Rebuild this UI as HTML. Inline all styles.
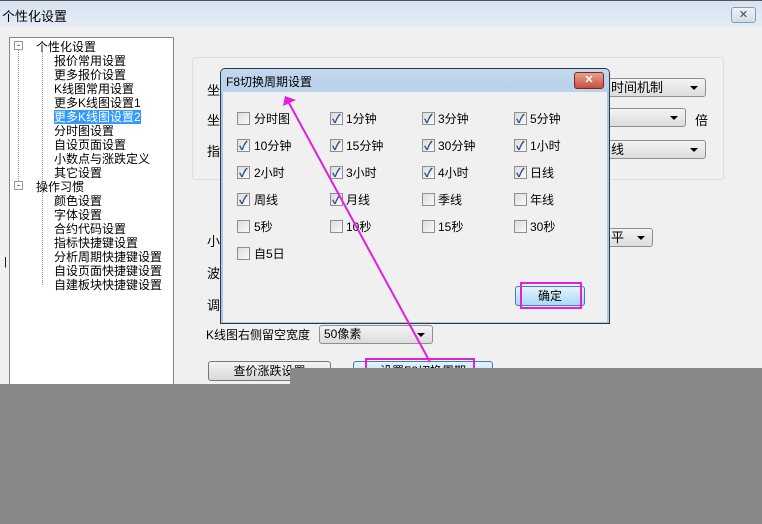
<!DOCTYPE html><html><head><meta charset="utf-8"><style>
*{margin:0;padding:0;box-sizing:border-box}
body{width:762px;height:524px;position:relative;overflow:hidden;background:#f0f0f0;font-family:"Liberation Sans","Noto Sans CJK SC",sans-serif;font-size:12px;color:#000}
.a{position:absolute;white-space:nowrap}
.sel{position:absolute;border:1px solid #8e8f8f;border-radius:3px;background:linear-gradient(#f4f4f4,#dcdcdc);height:19px;padding-left:4px;line-height:17px}
.sel:after{content:"";position:absolute;right:7px;top:7px;border:4px solid transparent;border-top:4px solid #000;border-bottom:0}
.cb{position:absolute;width:13px;height:13px;border:1px solid #8f8f8f;background:linear-gradient(135deg,#dcdcdc,#fafafa)}
.cb.c:after{content:"✓";position:absolute;left:1px;top:-3px;font-size:12px;color:#2a4a8a;font-weight:bold}
.lb{position:absolute;font-size:12px;line-height:14px}
.tree div{height:14px;line-height:14px}
</style></head><body>
<div class="a" style="left:0;top:0;width:762px;height:27px;background:linear-gradient(#d7e3f1,#e4ecf6);border-top:1px solid #555"></div>
<div class="a" style="left:2px;top:6px;font-size:13px">个性化设置</div>
<div class="a" style="left:731px;top:7px;width:25px;height:16px;border:1px solid #8a9bb0;border-radius:3px;background:linear-gradient(#eef2f8,#d3dde9);text-align:center;font-size:11px;line-height:14px;color:#445">✕</div>
<div class="a" style="left:4px;top:256px;font-size:11px">|</div>
<div class="a tree" style="left:9px;top:37px;width:165px;height:350px;background:#fff;border:1px solid #828790;padding:2px 0 0 26px;font-size:12px">
<div>个性化设置</div>
<div style="padding-left:18px">报价常用设置</div>
<div style="padding-left:18px">更多报价设置</div>
<div style="padding-left:18px">K线图常用设置</div>
<div style="padding-left:18px">更多K线图设置1</div>
<div style="padding-left:18px"><span style="background:#3399ff;color:#fff">更多K线图设置2</span></div>
<div style="padding-left:18px">分时图设置</div>
<div style="padding-left:18px">自设页面设置</div>
<div style="padding-left:18px">小数点与涨跌定义</div>
<div style="padding-left:18px">其它设置</div>
<div>操作习惯</div>
<div style="padding-left:18px">颜色设置</div>
<div style="padding-left:18px">字体设置</div>
<div style="padding-left:18px">合约代码设置</div>
<div style="padding-left:18px">指标快捷键设置</div>
<div style="padding-left:18px">分析周期快捷键设置</div>
<div style="padding-left:18px">自设页面快捷键设置</div>
<div style="padding-left:18px">自建板块快捷键设置</div>
</div>
<div class="a" style="left:14px;top:41px;width:9px;height:9px;border:1px solid #999;background:#fff;font-size:9px;line-height:7px;text-align:center">-</div>
<div class="a" style="left:14px;top:181px;width:9px;height:9px;border:1px solid #999;background:#fff;font-size:9px;line-height:7px;text-align:center">-</div>
<div class="a" style="left:18px;top:50px;height:131px;border-left:1px dotted #999"></div>
<div class="a" style="left:42px;top:52px;height:233px;border-left:1px dotted #999"></div>
<div class="a" style="left:192px;top:57px;width:532px;height:123px;border:1px solid #d5dfe5;border-radius:3px"></div>
<div class="a" style="left:207px;top:80px;font-size:13px">坐</div>
<div class="a" style="left:207px;top:110px;font-size:13px">坐</div>
<div class="a" style="left:207px;top:141px;font-size:13px">指</div>
<div class="a" style="left:207px;top:231px;font-size:13px">小</div>
<div class="a" style="left:207px;top:263px;font-size:13px">波</div>
<div class="a" style="left:207px;top:295px;font-size:13px">调</div>
<div class="sel" style="left:600px;top:78px;width:106px;font-size:13px;padding-left:10px">时间机制</div>
<div class="sel" style="left:600px;top:108px;width:86px"></div>
<div class="a" style="left:695px;top:110px;font-size:13px">倍</div>
<div class="sel" style="left:600px;top:140px;width:106px;font-size:13px;padding-left:10px">线</div>
<div class="sel" style="left:600px;top:228px;width:53px;font-size:13px;padding-left:10px">平</div>
<div class="a" style="left:206px;top:326px;font-size:12px">K线图右侧留空宽度</div>
<div class="sel" style="left:319px;top:325px;width:114px;font-size:12px">50像素</div>
<div class="a" style="left:208px;top:361px;width:123px;height:20px;border:1px solid #777;border-radius:3px;background:linear-gradient(#f4f4f4,#d8d8d8);text-align:center;line-height:18px">查价涨跌设置</div>
<div class="a" style="left:353px;top:361px;width:140px;height:20px;border:1px solid #3c7fb1;border-radius:3px;background:linear-gradient(#e5f4fc,#a9d9f5);text-align:center;line-height:18px">设置F8切换周期</div>
<div class="a" style="left:365px;top:358px;width:110px;height:12px;border:2px solid #e020e0;border-bottom:0"></div>
<div class="a" style="left:220px;top:68px;width:390px;height:256px;background:#f0f0f0;border:1px solid #2a3a4a;border-radius:5px 5px 0 0;box-shadow:0 0 0 1px #a9c8e0 inset"></div>
<div class="a" style="left:221px;top:69px;width:388px;height:23px;background:linear-gradient(#c3d7ec,#b9d1ea);border-radius:4px 4px 0 0"></div>
<div class="a" style="left:226px;top:73px;font-size:12px">F8切换周期设置</div>
<div class="a" style="left:574px;top:72px;width:30px;height:17px;border:1px solid #7a2a20;border-radius:3px;background:linear-gradient(#e8a090,#c8503a);color:#fff;text-align:center;font-size:11px;font-weight:bold;line-height:15px">✕</div>
<div class="a" style="left:222px;top:92px;width:386px;height:230px;border-left:1px solid #a9c8e0;border-right:1px solid #a9c8e0"></div>

<div class="cb" style="left:237px;top:112px"></div><div class="lb" style="left:254px;top:112px">分时图</div>
<div class="cb c" style="left:330px;top:112px"></div><div class="lb" style="left:346px;top:112px">1分钟</div>
<div class="cb c" style="left:422px;top:112px"></div><div class="lb" style="left:438px;top:112px">3分钟</div>
<div class="cb c" style="left:514px;top:112px"></div><div class="lb" style="left:530px;top:112px">5分钟</div>
<div class="cb c" style="left:237px;top:139px"></div><div class="lb" style="left:254px;top:139px">10分钟</div>
<div class="cb c" style="left:330px;top:139px"></div><div class="lb" style="left:346px;top:139px">15分钟</div>
<div class="cb c" style="left:422px;top:139px"></div><div class="lb" style="left:438px;top:139px">30分钟</div>
<div class="cb c" style="left:514px;top:139px"></div><div class="lb" style="left:530px;top:139px">1小时</div>
<div class="cb c" style="left:237px;top:166px"></div><div class="lb" style="left:254px;top:166px">2小时</div>
<div class="cb c" style="left:330px;top:166px"></div><div class="lb" style="left:346px;top:166px">3小时</div>
<div class="cb c" style="left:422px;top:166px"></div><div class="lb" style="left:438px;top:166px">4小时</div>
<div class="cb c" style="left:514px;top:166px"></div><div class="lb" style="left:530px;top:166px">日线</div>
<div class="cb c" style="left:237px;top:193px"></div><div class="lb" style="left:254px;top:193px">周线</div>
<div class="cb c" style="left:330px;top:193px"></div><div class="lb" style="left:346px;top:193px">月线</div>
<div class="cb" style="left:422px;top:193px"></div><div class="lb" style="left:438px;top:193px">季线</div>
<div class="cb" style="left:514px;top:193px"></div><div class="lb" style="left:530px;top:193px">年线</div>
<div class="cb" style="left:237px;top:220px"></div><div class="lb" style="left:254px;top:220px">5秒</div>
<div class="cb" style="left:330px;top:220px"></div><div class="lb" style="left:346px;top:220px">10秒</div>
<div class="cb" style="left:422px;top:220px"></div><div class="lb" style="left:438px;top:220px">15秒</div>
<div class="cb" style="left:514px;top:220px"></div><div class="lb" style="left:530px;top:220px">30秒</div>
<div class="cb" style="left:237px;top:247px"></div><div class="lb" style="left:254px;top:247px">自5日</div>
<div class="a" style="left:515px;top:286px;width:70px;height:20px;border:1px solid #3c7fb1;border-radius:3px;background:linear-gradient(#e5f4fc,#a9d9f5);text-align:center;line-height:18px">确定</div>
<div class="a" style="left:520px;top:282px;width:62px;height:27px;border:2px solid #e020e0"></div>
<div class="a" style="left:290px;top:368px;width:472px;height:156px;background:#888"></div>
<div class="a" style="left:0;top:384px;width:762px;height:140px;background:#888"></div>
<svg class="a" style="left:0;top:0" width="762" height="524"><line x1="430" y1="362" x2="289" y2="103" stroke="#e020e0" stroke-width="2"/><polygon points="285,96 283,106 296,100" fill="#e020e0"/></svg>
</body></html>
